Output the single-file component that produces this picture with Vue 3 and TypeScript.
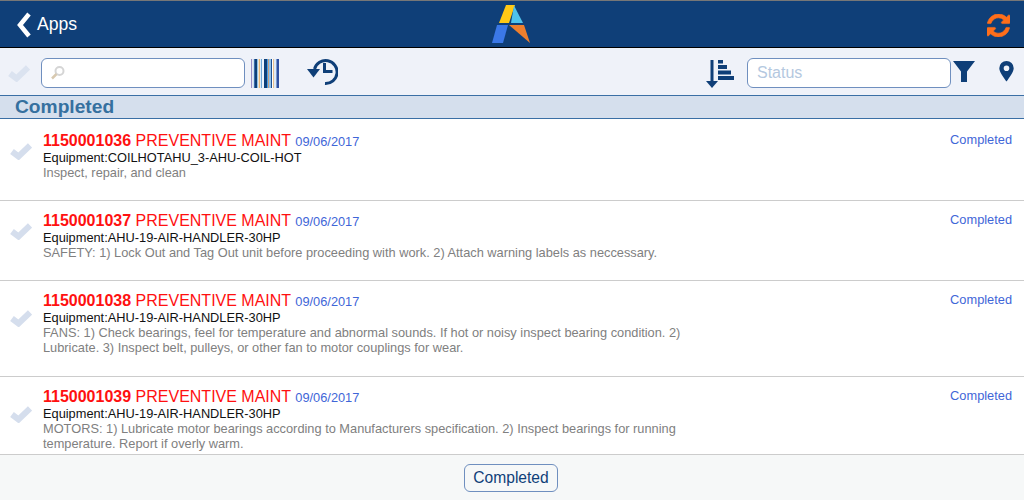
<script setup lang="ts">
interface Order {
  id: string;
  equipment: string;
  description: string;
}

const orders: Order[] = [
  { id: '1150001036', equipment: 'COILHOTAHU_3-AHU-COIL-HOT', description: 'Inspect, repair, and clean' },
  { id: '1150001037', equipment: 'AHU-19-AIR-HANDLER-30HP', description: 'SAFETY: 1) Lock Out and Tag Out unit before proceeding with work. 2) Attach warning labels as neccessary.' },
  { id: '1150001038', equipment: 'AHU-19-AIR-HANDLER-30HP', description: 'FANS: 1) Check bearings, feel for temperature and abnormal sounds. If hot or noisy inspect bearing condition. 2) Lubricate. 3) Inspect belt, pulleys, or other fan to motor couplings for wear.' },
  { id: '1150001039', equipment: 'AHU-19-AIR-HANDLER-30HP', description: 'MOTORS: 1) Lubricate motor bearings according to Manufacturers specification. 2) Inspect bearings for running temperature. Report if overly warm.' },
]

// stripes of the scanner icon: width in px, colour
const bars = [
  [1, '#9a8fc8'], [1, '#e4e8f4'], [1, '#cfe0f2'], [1, '#3a6aaa'], [2, '#0f3f78'], [1, '#8fc0e8'], [1, '#f4e4d0'], [1, '#e8b878'], [1, '#dcecf8'],
  [1, '#6fa8d8'], [2, '#eef4fb'], [3, '#0f3f78'], [1, '#4fa0e0'], [1, '#c8a080'], [2, '#8fc0e8'], [1, '#1f5090'], [1, '#fff'], [1, '#e8c090'],
  [2, '#dfeaf6'], [1, '#7a9ad0'], [2, '#3050a0'],
] as [number, string][]
</script>

<template>
  <div class="page">
    <header class="header">
      <a class="back">
        <svg width="18" height="26" viewBox="0 0 18 26"><path d="M14 2 5 13l9 11" fill="none" stroke="#fff" stroke-width="4.500" /></svg>
        <span>Apps</span>
      </a>
      <svg class="logo" width="40" height="42" viewBox="0 0 40 42">
        <path d="M15 2h9L18 20H8z" fill="#ffc815" />
        <path d="M23 2.500 32 20H20z" fill="#4fc3ec" />
        <path d="M6 22H17L12 40H1z" fill="#3b78e7" />
        <path d="M18 22H33L39 40z" fill="#ee7f2d" />
      </svg>
      <svg class="sync" width="23" height="23" viewBox="0 0 1536 1536">
        <path fill="#ff6e1a" stroke="#ff6e1a" stroke-width="40" d="M1511 928q0 5-1 7-64 268-268 434.500t-478 166.500q-146 0-282.500-55t-243.500-157l-129 129q-19 19-45 19t-45-19-19-45v-448q0-26 19-45t45-19h448q26 0 45 19t19 45-19 45l-137 137q71 66 161 102t187 36q134 0 250-65t186-179q11-17 53-117 8-23 30-23h192q13 0 22.500 9.500t9.500 22.500zm25-800v448q0 26-19 45t-45 19h-448q-26 0-45-19t-19-45 19-45l138-138q-148-137-349-137-134 0-250 65t-186 179q-11 17-53 117-8 23-30 23h-199q-13 0-22.500-9.500t-9.500-22.500v-7q65-268 270-434.500t480-166.500q146 0 284 55.500t245 156.500l130-129q19-19 45-19t45 19 19 45z" />
      </svg>
    </header>

    <div class="toolbar">
      <svg class="tick" width="22" height="18" viewBox="0 0 22 18"><path d="M2 9.500 8.500 14.500 20 3.500" fill="none" stroke="#dbe3f0" stroke-width="6" /></svg>
      <div class="field search">
        <svg width="16" height="16" viewBox="0 0 16 16">
          <circle cx="9.500" cy="6" r="4" fill="none" stroke="#d5d5d5" stroke-width="2" />
          <path d="M6.500 9 2 13.500" stroke="#d8c9b0" stroke-width="2.500" />
        </svg>
      </div>
      <div class="barcode">
        <i v-for="(b, i) in bars" :key="i" :style="{ width: b[0] + 'px', background: b[1] }"></i>
      </div>
      <svg class="history" width="32" height="28" viewBox="0 0 32 28">
        <path d="M8.500 11A11.500 11.500 0 1 1 19 25.500" fill="none" stroke="#0f3f78" stroke-width="3" />
        <path d="M1 11h13L7.500 19.500z" fill="#0f3f78" />
        <path d="M18.500 5v8.500h8" fill="none" stroke="#0f3f78" stroke-width="3" />
      </svg>
      <div class="spacer"></div>
      <svg class="sort" width="28" height="28" viewBox="0 0 28 28">
        <path d="M6 0v23" stroke="#0f3f78" stroke-width="3" />
        <path d="M0 21h12L6 28z" fill="#0f3f78" />
        <path d="M12 0h5v3.500h-5zM12 5h9v4h-9zM12 10.500h13v4H12zM12 16h16v4H12z" fill="#0f3f78" />
      </svg>
      <div class="field status">Status</div>
      <svg class="funnel" width="22" height="22" viewBox="0 0 22 22"><path d="M0 0h22l-8 10.500V21H8V10.500z" fill="#0f3f78" /></svg>
      <svg class="pin" width="15" height="21" viewBox="0 0 15 21"><path fill-rule="evenodd" d="M7.500 0A7.200 7.200 0 0 1 14.700 7.200C14.700 11 10 17 7.500 20.500 5 17 .3 11 .3 7.200A7.200 7.200 0 0 1 7.500 0zm0 4.500a2.800 2.800 0 1 0 0 5.600 2.800 2.800 0 0 0 0-5.600z" fill="#0f3f78" /></svg>
    </div>

    <div class="section">Completed</div>

    <main class="list">
      <article v-for="o in orders" :key="o.id" class="row">
        <div class="inner">
          <svg class="tick" width="22" height="18" viewBox="0 0 22 18"><path d="M2 9.500 8.500 14.500 20 3.500" fill="none" stroke="#d5deed" stroke-width="6" /></svg>
          <div class="body">
            <div class="title"><b>{{ o.id }}</b> PREVENTIVE MAINT <span class="date">09/06/2017</span></div>
            <div class="equip">Equipment:{{ o.equipment }}</div>
            <div class="desc">{{ o.description }}</div>
          </div>
        </div>
        <div class="state">Completed</div>
      </article>
    </main>

    <footer class="footer"><button class="chip">Completed</button></footer>
  </div>
</template>

<style>
body { margin: 0; }
</style>

<style scoped>
.page {
  width: 1024px;
  height: 500px;
  display: flex;
  flex-direction: column;
  overflow: hidden;
  font-family: "Liberation Sans", Arial, sans-serif;
  background: #fff;
}
.header {
  height: 46px;
  flex: none;
  position: relative;
  display: flex;
  align-items: center;
  justify-content: space-between;
  background: #0f3f78;
  border-top: 1px solid #777;
  border-bottom: 1px solid #000;
  padding: 0 14px 0 15px;
}
.back {
  display: flex;
  align-items: center;
  gap: 4px;
  color: #fff;
  font-size: 17.6px;
  margin-top: 2px;
}
.back span { margin-top: -2px; }
.logo {
  position: absolute;
  left: 491px;
  top: 2px;
}
.sync { margin-top: 3px; }
.toolbar {
  box-sizing: border-box;
  height: 47px;
  flex: none;
  display: flex;
  align-items: center;
  background: #eff2f9;
  padding: 3px 10px 0 8px;
}
.toolbar .tick { margin-right: 11px; }
.field {
  box-sizing: border-box;
  height: 30px;
  background: #fff;
  border: 1px solid #6f8fbf;
  border-radius: 6px;
  display: flex;
  align-items: center;
}
.search { width: 204px; padding-left: 8px; }
.barcode {
  display: flex;
  height: 29px;
  margin-left: 6px;
  width: 29px;
  overflow: hidden;
}
.barcode i { display: block; flex: none; }
.history { margin-left: 26px; margin-top: -2px; }
.spacer { flex: 1; }
.sort { margin-right: 13px; margin-top: 2px; }
.status {
  width: 204px;
  padding-left: 9px;
  color: #b4c8e0;
  font-size: 16px;
}
.funnel { margin-left: 2px; margin-right: 24px; margin-top: -2px; }
.pin { margin-top: -3px; }
.section {
  height: 22px;
  flex: none;
  background: #d5dfed;
  border-top: 1px solid #3a6fa5;
  border-bottom: 1px solid #3a6fa5;
  padding-left: 15px;
  color: #35709f;
  font-size: 19.2px;
  font-weight: bold;
  line-height: 22px;
}
.list { flex: 1; overflow: hidden; min-height: 0; }
.row {
  position: relative;
  padding: 11px 11px 19px 10px;
  border-bottom: 1px solid #ccc;
}
.row:first-child { padding-top: 13px; }
.row:nth-child(3) { padding-bottom: 20px; }
.inner { display: flex; align-items: center; }
.inner .tick { margin-right: 11px; margin-bottom: 12px; flex: none; }
.body { width: 650px; }
.title { font-size: 16px; line-height: 18px; color: #ff1010; }
.date { font-size: 12.8px; line-height: 1; color: #3f66d8; }
.equip { font-size: 12.8px; line-height: 16px; color: #111; }
.desc { font-size: 12.8px; line-height: 15px; color: #808080; margin-top: -1px; padding-bottom: 1px; }
.state {
  position: absolute;
  right: 12px;
  top: 11px;
  font-size: 12.8px;
  color: #3f66d8;
}
.row:first-child .state { top: 13px; }
.footer {
  height: 46px;
  flex: none;
  box-sizing: border-box;
  background: #f6f8f8;
  border-top: 1px solid #ccc;
  padding-top: 1px;
  display: flex;
  justify-content: center;
  align-items: center;
}
.chip {
  font: 15.6px "Liberation Sans", Arial, sans-serif;
  color: #0f3f78;
  background: #f6f8f8;
  border: 1px solid #6f8fbf;
  border-radius: 6px;
  height: 28px;
  padding: 0 8px;
  margin-right: 2px;
}
</style>
